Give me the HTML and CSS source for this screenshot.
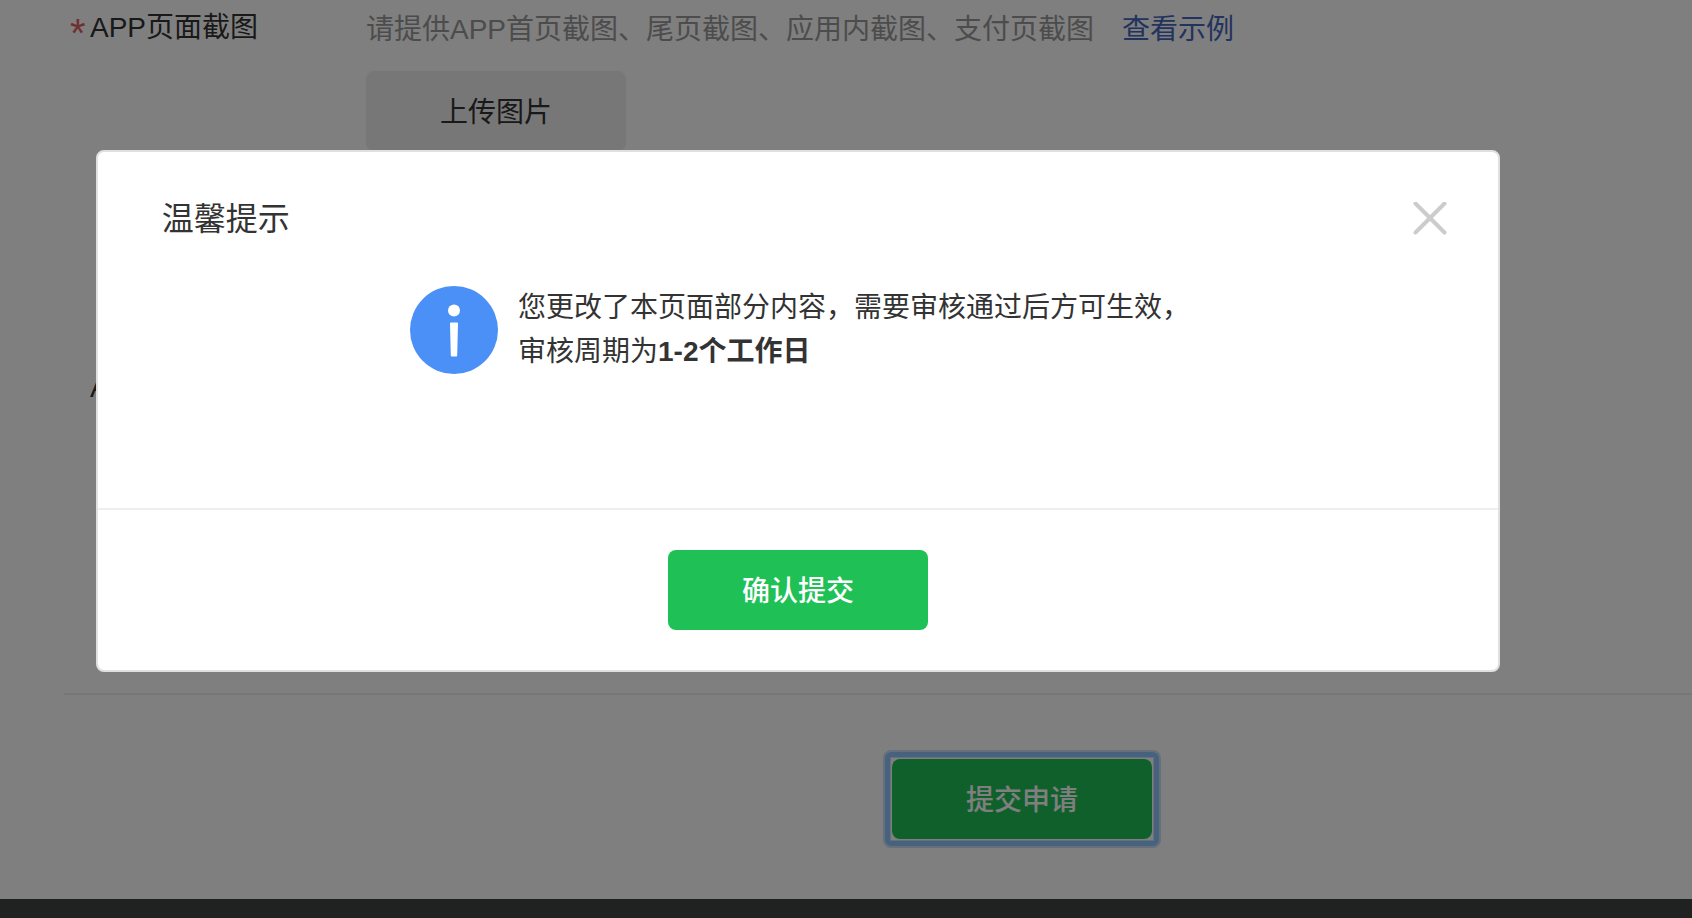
FILE: index.html
```
<!DOCTYPE html>
<html lang="zh-CN">
<head>
    <meta charset="UTF-8">
    <meta name="viewport" content="width=device-width, initial-scale=1.0">
    <title>温馨提示</title>
    <link rel="stylesheet" href="styles.css">
</head>
<body>
    <main class="page">
        <form class="form">
            <div class="form-row">
                <label class="form-label" for="upload"><span class="required">*</span>APP页面截图</label>
                <div class="form-field">
                    <p class="hint">请提供APP首页截图、尾页截图、应用内截图、支付页截图<a class="link" href="#">查看示例</a></p>
                    <button type="button" class="btn btn-default" id="upload">上传图片</button>
                </div>
            </div>
            <div class="form-row">
                <span class="form-label">A</span>
            </div>
            <div class="form-actions">
                <button type="submit" class="btn btn-primary focused">提交申请</button>
            </div>
        </form>
    </main>
    <footer class="footer"></footer>

    <div class="mask">
        <div class="dialog" role="dialog" aria-modal="true" aria-labelledby="dialogTitle">
            <div class="dialog-header">
                <h3 class="dialog-title" id="dialogTitle">温馨提示</h3>
                <button type="button" class="dialog-close" aria-label="关闭">
                    <svg width="34" height="34" viewBox="0 0 34 34">
                        <path d="M2.5 1.5L31.5 30.5M31.5 1.5L2.5 30.5" stroke="#ccc" stroke-width="4" stroke-linecap="round"/>
                    </svg>
                </button>
            </div>
            <div class="dialog-body">
                <svg class="icon-info" width="88" height="88" viewBox="0 0 88 88">
                    <circle cx="44" cy="44" r="44" fill="#4a90f7"/>
                    <circle cx="44" cy="24.5" r="6" fill="#fff"/>
                    <path d="M41 36.500h6q1 0 1 1l-.8 32q0 1-1 1h-4.400q-1 0-1-1l-.8-32q0-1 1-1z" fill="#fff"/>
                </svg>
                <p class="message">您更改了本页面部分内容，需要审核通过后方可生效，<br>审核周期为<strong>1-2个工作日</strong></p>
            </div>
            <div class="dialog-footer">
                <button type="button" class="btn btn-primary">确认提交</button>
            </div>
        </div>
    </div>
</body>
</html>
```

FILE: styles.css
```
* {
    box-sizing: border-box;
}

body {
    margin: 0;
    min-height: 100vh;
    display: flex;
    flex-direction: column;
    font-family: "Liberation Sans", "Noto Sans CJK SC", sans-serif;
    font-size: 28px;
    line-height: 44px;
    color: #333;
    background-color: #fff;
}

h3,
p {
    margin: 0;
    font-weight: normal;
}

.page {
    padding-left: 64px;
}

.form-row {
    display: flex;
    min-height: 360px;
    padding-top: 6px;
}

.form-row + .form-row {
    min-height: 333px;
}

.form-label {
    flex: none;
    width: 302px;
    padding-left: 26px;
}

.required {
    display: inline-block;
    width: 20px;
    margin-left: -20px;
    font-size: 40px;
    line-height: 20px;
    vertical-align: -10px;
    color: #e15f63;
}

.hint {
    margin-top: 2px;
    color: #999;
}

.link {
    margin-left: 28px;
    color: #4466bb;
    text-decoration: none;
}

.btn {
    display: inline-block;
    width: 260px;
    height: 80px;
    padding: 0 0 2px;
    border: none;
    border-radius: 8px;
    font-family: inherit;
    font-size: 28px;
    cursor: pointer;
}

.btn-default {
    margin-top: 19px;
    background-color: #eee;
    color: #333;
}

.btn-primary {
    background-color: #1fc157;
    color: #fff;
    font-weight: 500;
}

.focused {
    position: relative;
}

/* focus ring */
.focused::after {
    content: "";
    position: absolute;
    inset: -7px;
    border: 5px solid #8cc4ff;
    border-radius: 6px;
    box-shadow: 0 0 0 2px #cce0f4, inset 0 0 0 1px #cce0f4;
}

.form-actions {
    padding: 64px 0 60px 288px;
    border-top: 2px solid #eee;
    text-align: center;
    line-height: 0;
}

.footer {
    flex: 1;
    background-color: #3f4442;
}

/* dialog */
.mask {
    position: fixed;
    top: 0;
    left: 0;
    right: 0;
    bottom: 0;
    display: flex;
    justify-content: center;
    align-items: center;
    padding: 0 96px 96px 0;
    background-color: rgba(0, 0, 0, 0.5);
}

.dialog {
    width: 88%;
    border: 2px solid #e0e0e0;
    border-radius: 8px;
    background-color: #fff;
}

.dialog-header {
    display: flex;
    justify-content: space-between;
    align-items: center;
    padding: 45px 51px 0 64px;
}

.dialog-title {
    font-size: 32px;
}

.dialog-close {
    display: flex;
    padding: 0;
    border: none;
    background: none;
    cursor: pointer;
}

.dialog-body {
    display: flex;
    justify-content: center;
    min-height: 267px;
    padding: 45px 0 0 4px;
}

.icon-info {
    flex: none;
    margin-right: 20px;
}

.dialog-footer {
    padding: 40px 0;
    border-top: 2px solid #eee;
    text-align: center;
    line-height: 0;
}
```
